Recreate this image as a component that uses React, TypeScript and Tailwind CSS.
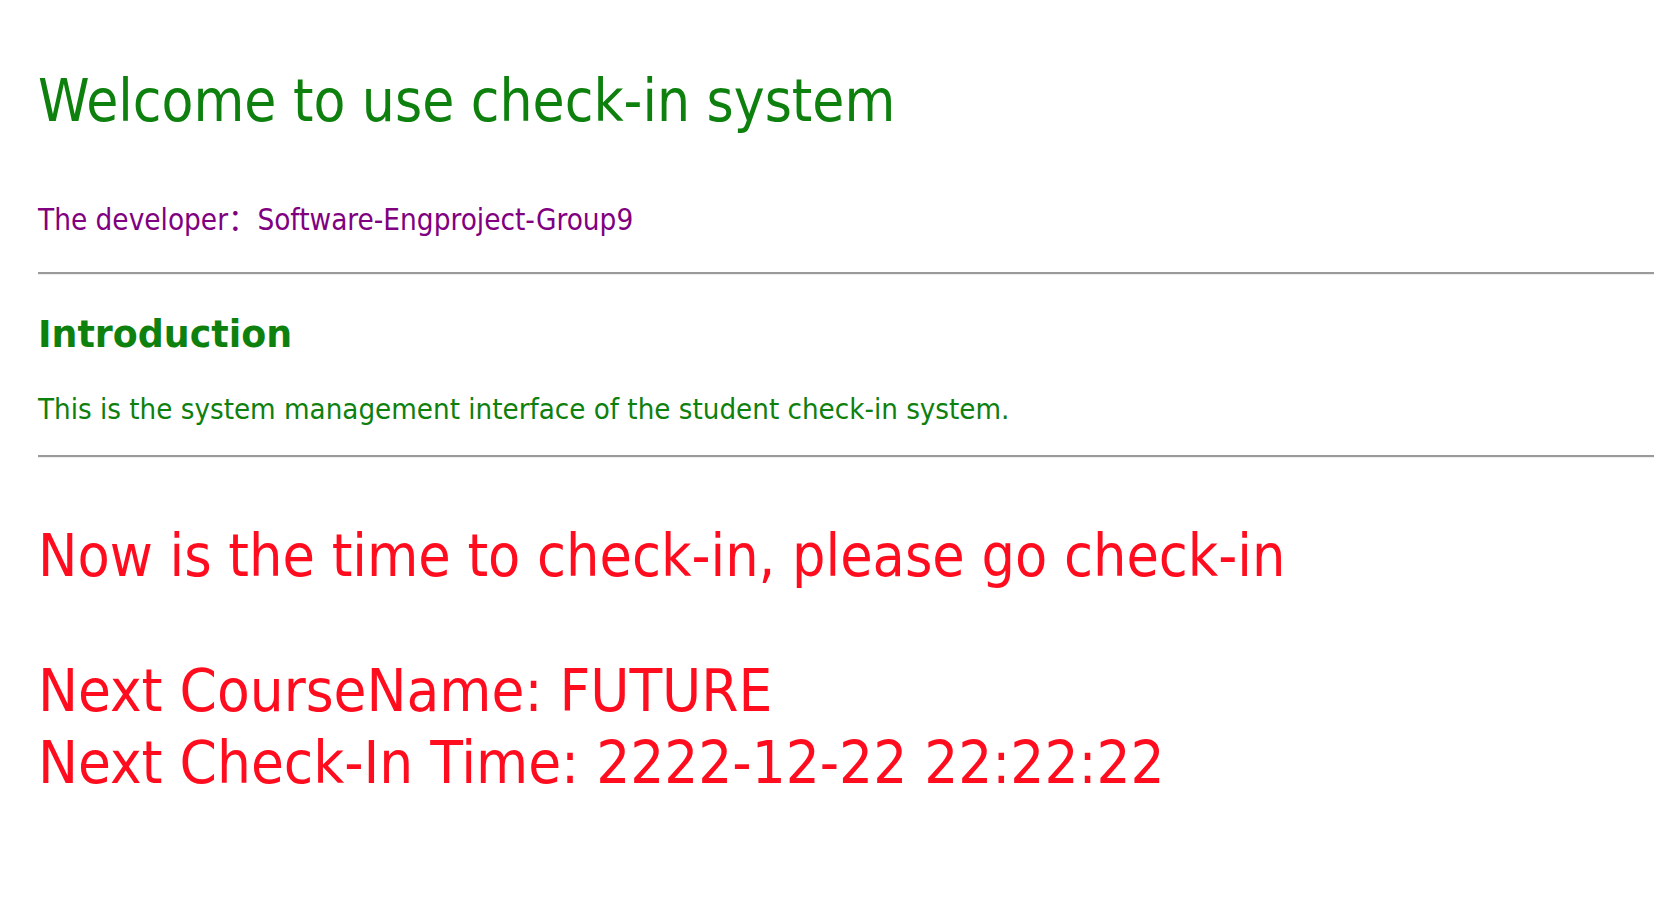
export default function App() {
  const font = { fontFamily: '"DejaVu Sans Condensed", "DejaVu Sans", "Noto Sans CJK SC", sans-serif' };
  const bold = { fontFamily: '"DejaVu Sans", "Noto Sans CJK SC", sans-serif' };
  return (
    <div className="min-h-screen bg-white pl-[38px] pt-[67px]" style={font}>
      <h1 className="text-[58px] leading-[68px] text-[#0e800e] whitespace-nowrap">Welcome to use check-in system</h1>
      <p className="mt-[68px] text-[29.4px] leading-[34px] text-[#800080] whitespace-nowrap">
        The developer：Software-Engproject-Group9
      </p>
      <hr className="mt-[35px] border-t-2 border-b border-t-[#9a9a9a] border-b-[#eeeeee]" />
      <h3 className="mt-[39px] text-[36.4px] leading-[42px] font-bold text-[#0e800e]" style={bold}>
        Introduction
      </h3>
      <p className="mt-[36px] text-[29.2px] leading-[34px] text-[#0e800e] whitespace-nowrap">
        This is the system management interface of the student check-in system.
      </p>
      <hr className="mt-[29px] border-t-2 border-b border-t-[#9a9a9a] border-b-[#eeeeee]" />
      <div className="mt-[64px] text-[58.6px] leading-[68px] text-[#ff0d1f] whitespace-nowrap">
        Now is the time to check-in, please go check-in
      </div>
      <div className="mt-[65px] text-[59.5px] leading-[72px] text-[#ff0d1f] whitespace-nowrap">
        <div>Next CourseName: FUTURE</div>
        <div>Next Check-In Time: 2222-12-22 22:22:22</div>
      </div>
    </div>
  );
}
